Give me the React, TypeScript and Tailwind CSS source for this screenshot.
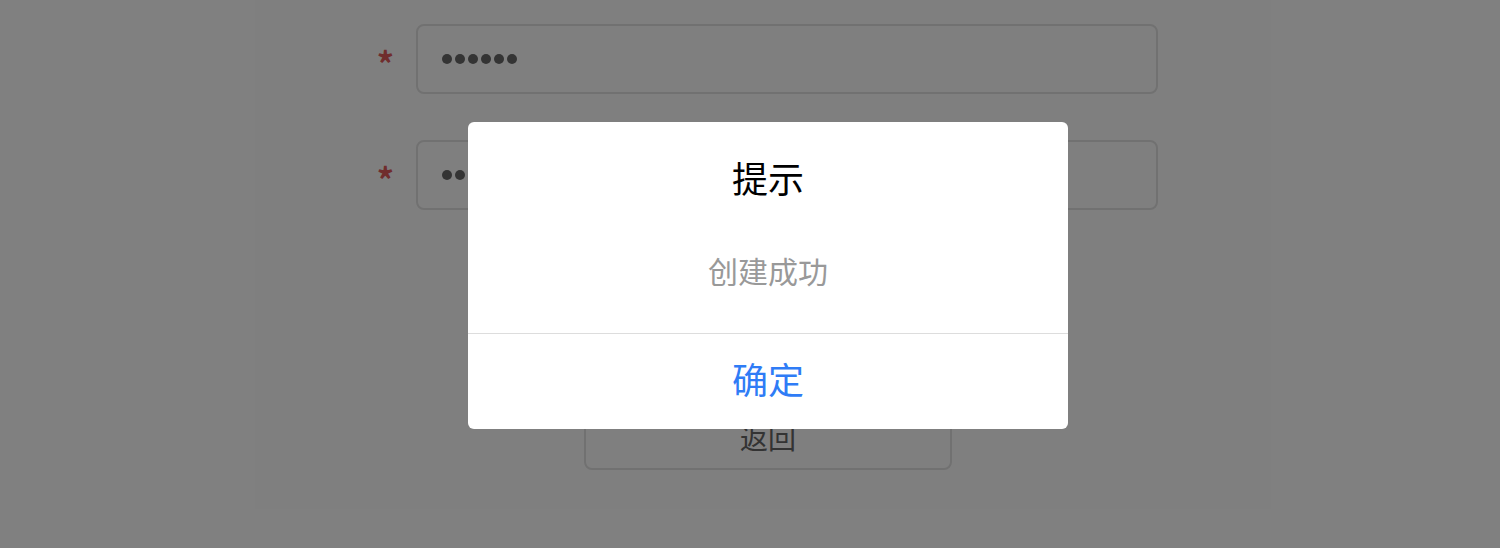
import { useState } from "react";

const cjk = { fontFamily: '"Noto Sans CJK SC", "Noto Sans", sans-serif' };

function Field({ count }: { count: number }) {
    return (
        <div className="flex items-center">
            <span className="w-[44px] pr-[22px] text-right text-[34px] font-bold leading-none text-[#e05a5a] pt-[8px]">*</span>
            <div className="w-[742px] h-[70px] rounded-lg border-2 border-[#e2e2e2] bg-white px-[24px] flex items-center gap-[3px]">
                {Array.from({ length: count }).map((_, i) => (
                    <span key={i} className="w-[10px] h-[10px] rounded-full bg-[#686868]" />
                ))}
            </div>
        </div>
    );
}

export default function App() {
    const [open, setOpen] = useState(true);

    return (
        <div className="relative h-[548px] w-full overflow-hidden bg-white" style={cjk}>
            <div className="pl-[372px] pt-[24px] flex flex-col gap-[46px]">
                <Field count={6} />
                <Field count={6} />
                <div className="flex flex-col gap-[38px] pl-[212px] pt-[44px]">
                    <button className="w-[368px] h-[66px] rounded-lg bg-[#2f7cf6] text-[30px] text-white">提交</button>
                    <button className="w-[368px] h-[66px] rounded-lg border-2 border-[#e2e2e2] bg-white text-[28px] leading-[56px] text-[#666666]">返回</button>
                </div>
            </div>

            {open && (
                <div className="absolute inset-0 bg-black/50 flex items-center justify-center pl-[36px] pt-[2px]">
                    <div className="w-[600px] rounded-md bg-white text-center overflow-hidden">
                        <div className="pt-[33px] text-[36px] leading-[44px] text-black">提示</div>
                        <div className="mt-[51px] pb-[43px] text-[30px] leading-[40px] text-[#999999]">创建成功</div>
                        <button
                            onClick={() => setOpen(false)}
                            className="w-full h-[96px] pb-[6px] border-t border-[#dddddd] text-[36px] leading-none text-[#2f7cf6]"
                        >
                            确定
                        </button>
                    </div>
                </div>
            )}
        </div>
    );
}
